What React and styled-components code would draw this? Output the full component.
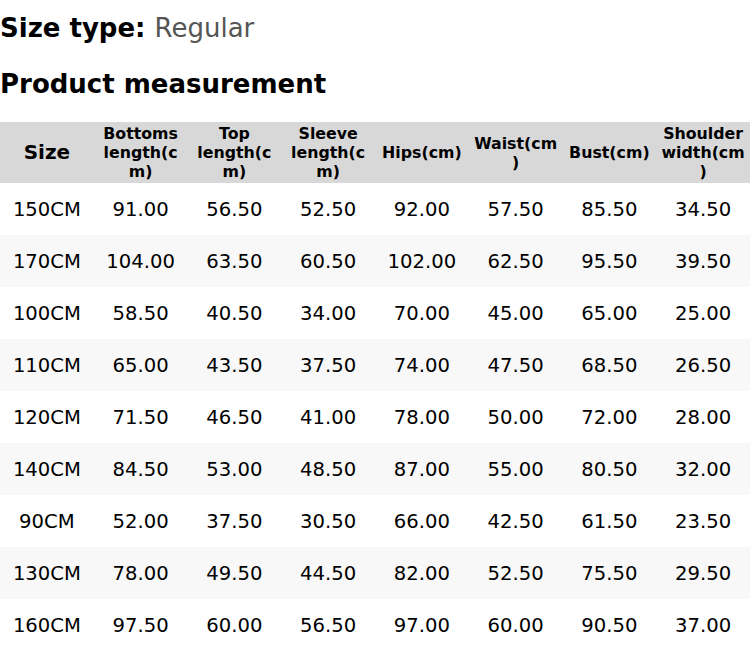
import React from "react";
import styled, { createGlobalStyle } from "styled-components";

const GlobalStyle = createGlobalStyle`
  body {
    margin: 0;
    background: #fff;
    font-family: "DejaVu Sans", Verdana, sans-serif;
    color: #000;
  }
`;

const Page = styled.div`
  width: 750px;
  padding-top: 13px;
`;

const Title = styled.h2`
  margin: 0;
  font-size: 26px;
  line-height: 30px;
  font-weight: bold;

  span {
    font-weight: normal;
    color: #555;
  }
`;

const Subtitle = styled(Title)`
  margin-top: 26px;
  margin-bottom: 23px;
`;

const Table = styled.table`
  width: 750px;
  table-layout: fixed;
  border-collapse: collapse;

  th {
    background: #d8d8d8;
    height: 61px;
    padding: 0 4px;
    font-size: 15.8px;
    line-height: 19px;
    font-weight: bold;
    text-align: center;
    vertical-align: middle;
    overflow-wrap: anywhere;
  }
  th.main {
    font-size: 20px;
  }
  td {
    height: 52px;
    padding: 0 4px;
    font-size: 19.6px;
    text-align: center;
    vertical-align: middle;
  }
  tbody tr:nth-child(even) td {
    background: #f8f8f8;
  }
`;

const headers = [
  "Bottoms length(cm)",
  "Top length(cm)",
  "Sleeve length(cm)",
  "Hips(cm)",
  "Waist(cm)",
  "Bust(cm)",
  "Shoulder width(cm)",
];

const rows = [
  ["150CM", "91.00", "56.50", "52.50", "92.00", "57.50", "85.50", "34.50"],
  ["170CM", "104.00", "63.50", "60.50", "102.00", "62.50", "95.50", "39.50"],
  ["100CM", "58.50", "40.50", "34.00", "70.00", "45.00", "65.00", "25.00"],
  ["110CM", "65.00", "43.50", "37.50", "74.00", "47.50", "68.50", "26.50"],
  ["120CM", "71.50", "46.50", "41.00", "78.00", "50.00", "72.00", "28.00"],
  ["140CM", "84.50", "53.00", "48.50", "87.00", "55.00", "80.50", "32.00"],
  ["90CM", "52.00", "37.50", "30.50", "66.00", "42.50", "61.50", "23.50"],
  ["130CM", "78.00", "49.50", "44.50", "82.00", "52.50", "75.50", "29.50"],
  ["160CM", "97.50", "60.00", "56.50", "97.00", "60.00", "90.50", "37.00"],
];

export default function App() {
  return (
    <Page>
      <GlobalStyle />
      <Title>
        Size type: <span>Regular</span>
      </Title>
      <Subtitle>Product measurement</Subtitle>
      <Table>
        <thead>
          <tr>
            <th className="main">Size</th>
            {headers.map((h) => (
              <th key={h}>{h}</th>
            ))}
          </tr>
        </thead>
        <tbody>
          {rows.map((r) => (
            <tr key={r[0]}>
              {r.map((c, i) => (
                <td key={i}>{c}</td>
              ))}
            </tr>
          ))}
        </tbody>
      </Table>
    </Page>
  );
}
